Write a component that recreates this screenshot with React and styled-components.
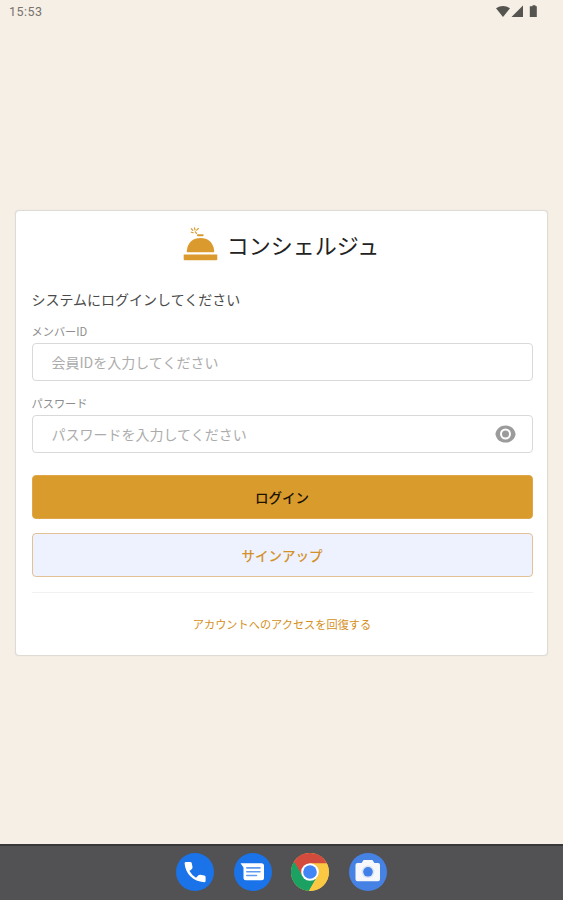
import React from 'react'
import styled, { createGlobalStyle } from 'styled-components'

const GlobalStyle = createGlobalStyle`
	* {
		box-sizing: border-box;
	}
	body {
		margin: 0;
		background-color: #f5efe6;
		font-family: 'Noto Sans CJK JP', 'Noto Sans', sans-serif;
	}
`

const Screen = styled.div`
	display: flex;
	flex-direction: column;
	height: 900px;
	background-color: #f5efe6;
`

const StatusBar = styled.div`
	display: flex;
	justify-content: space-between;
	align-items: center;
	height: 23px;
	padding: 0 25px 0 9px;
	flex-shrink: 0;
`

const Time = styled.span`
	font-family: Roboto, sans-serif;
	font-size: 12.5px;
	letter-spacing: 0.5px;
	color: #77736d;
`

const Main = styled.main`
	flex: 1;
	padding: 187px 15px 0;
`

const Card = styled.section`
	height: 446px;
	padding: 16px 14.5px 0 15.5px;
	border: 1px solid #dddbd4;
	border-radius: 4px;
	background-color: #ffffff;
	box-shadow: 0 0 1px #d8d6cf;
`

const Brand = styled.div`
	display: flex;
	justify-content: center;
	height: 36px;
	padding-right: 2px;
	gap: 9px;
`

const BrandName = styled.h1`
	margin: 0;
	font-size: 22px;
	font-weight: 400;
	line-height: 34px;
	color: #222222;
`

const Lead = styled.p`
	margin: 26px 0 0;
	font-size: 14px;
	line-height: 20px;
	color: #4a4a4a;
`

const Label = styled.label`
	display: block;
	margin-top: ${props => props.$top}px;
	font-size: 11.2px;
	line-height: 16px;
	color: #8d8d8d;
`

const Field = styled.div`
	display: flex;
	align-items: center;
	justify-content: space-between;
	height: 38px;
	margin-top: 4px;
	padding: 0 16px 0 19px;
	border: 1px solid #d9d9d9;
	border-radius: 4px;
	background-color: #ffffff;
`

const Input = styled.input`
	flex: 1;
	min-width: 0;
	padding: 0;
	border: none;
	outline: none;
	background: none;
	font-family: inherit;
	font-size: 14px;
	color: #444444;

	&::placeholder {
		color: #acacac;
		opacity: 1;
	}
`

const Button = styled.button`
	display: block;
	width: 100%;
	height: 44px;
	margin-top: ${props => props.$top}px;
	padding: 0 0 1px;
	border: 1px solid ${props => (props.$primary ? '#e0a74a' : '#e2c197')};
	border-radius: 4px;
	background-color: ${props => (props.$primary ? '#da9b2d' : '#edf2fe')};
	color: ${props => (props.$primary ? '#1c1303' : '#d4912a')};
	font-family: inherit;
	font-size: 13.5px;
	font-weight: 500;
`

const Divider = styled.hr`
	height: 1px;
	margin: 15px 0 0;
	border: none;
	background-color: #f1f1f1;
`

const Recover = styled.a`
	display: block;
	margin-top: 23px;
	font-size: 11.2px;
	font-weight: 400;
	line-height: 16px;
	text-align: center;
	color: #d58f22;
`

const Dock = styled.nav`
	display: flex;
	justify-content: center;
	gap: 19.5px;
	height: 56px;
	padding-top: 7px;
	border-top: 2px solid #38383a;
	background-color: #525255;
	flex-shrink: 0;
`

const StatusIcons = () => (
	<svg width="42" height="14" viewBox="0 0 42 14" fill="#56544f">
		<path d="M0 3.2Q7 -1 14 3.2L7 12Z" />
		<path d="M27 0.5V12H15.5Z" />
		<path d="M35.2 1.2H36.5V0.2H39.5V1.2H40.8V12H33.8V1.2Z" />
	</svg>
)

const BellIcon = () => (
	<svg width="35" height="36" viewBox="0 0 35 36" fill="#db9a2e">
		<path d="M0.7 27.6H34.3V32.2Q34.3 33.3 33.2 33.3H1.8Q0.7 33.3 0.7 32.2Z" />
		<path d="M3.9 25.3V23.2C4.6 15.5 10 10.9 17.5 10.9S30.4 15.5 31.1 23.2V25.3Z" />
		<rect x="14" y="7.2" width="6.6" height="2" rx="0.8" />
		<g stroke="#db9a2e" strokeWidth="1.2" strokeLinecap="round">
			<path d="M8.3 1.7L9.8 3.4M11.4 0.9L12.1 3M15.4 1.4L13.7 3.2M8.3 5.2L10.2 5.8M12.3 4.8L13.5 6.4" />
		</g>
	</svg>
)

const EyeIcon = () => (
	<svg width="21" height="18" viewBox="0 0 21 18">
		<path d="M0.4 9C1.4 3.4 5.4 0.4 10.5 0.4S19.6 3.4 20.6 9C19.6 14.6 15.6 17.6 10.5 17.6S1.4 14.6 0.4 9Z" fill="#9b9b9b" />
		<circle cx="10.5" cy="9" r="4.5" fill="#9b9b9b" stroke="#ffffff" strokeWidth="2" />
	</svg>
)

const PhoneIcon = () => (
	<svg width="38" height="38" viewBox="0 0 38 38">
		<circle cx="19" cy="19" r="19" fill="#1a73e8" />
		<path
			d="M8.6 10.3Q8.6 8.9 10 8.9H14.2Q15.5 8.9 15.8 10.2L16.5 14Q16.7 15.1 15.9 15.9L13.5 18.1Q15.8 22.3 20 24.7L22.4 22.3Q23.2 21.5 24.3 21.7L28.3 22.5Q29.6 22.8 29.6 24.1V27.7Q29.6 29.2 28.1 29.2C17.4 28.6 9.2 20.8 8.6 10.3Z"
			fill="#ffffff"
		/>
	</svg>
)

const MessagesIcon = () => (
	<svg width="38" height="38" viewBox="0 0 38 38">
		<circle cx="19" cy="19" r="19" fill="#1a73e8" />
		<path d="M6.5 10.3H27.5Q30 10.3 30 12.8V24.7Q30 27.2 27.5 27.2H12Q9.5 27.2 9.5 24.7V14.5Z" fill="#ffffff" />
		<path d="M12.8 14.9H26M12.8 18.7H26M12.8 22.5H22.5" stroke="#5f9bef" strokeWidth="1.6" strokeLinecap="round" />
	</svg>
)

const ChromeIcon = () => (
	<svg width="38" height="38" viewBox="0 0 38 38">
		<circle cx="19" cy="19" r="19" fill="#fbc843" />
		<path d="M19 10.5H35.9A19 19 0 0 0 2.5 9.5L11.6 23.2L19 19Z" fill="#d34b3d" />
		<path d="M2.5 9.5A19 19 0 0 0 17.9 38L26.4 23.2L19 19L11.6 23.2L3.8 9.8Z" fill="#1ba262" />
		<path d="M26.4 23.2L17.9 38A19 19 0 0 0 35.9 10.5H19Z" fill="#fbc843" />
		<circle cx="19" cy="19" r="8.8" fill="#ffffff" />
		<circle cx="19" cy="19" r="6.8" fill="#4285f4" />
	</svg>
)

const CameraIcon = () => (
	<svg width="38" height="38" viewBox="0 0 38 38">
		<circle cx="19" cy="19" r="19" fill="#4682e4" />
		<path d="M8.5 10.1H12.6L14.6 7.1H23.4L25.4 10.1H29Q31 10.1 31 12.1V26.2Q31 28.2 29 28.2H8.5Q6.5 28.2 6.5 26.2V12.1Q6.5 10.1 8.5 10.1Z" fill="#f5f7fb" />
		<circle cx="19" cy="18.8" r="6.2" fill="#d9e3f5" />
		<circle cx="19" cy="18.8" r="4.8" fill="#4080e8" />
	</svg>
)

const App = () => {
	return (
		<React.Fragment>
			<GlobalStyle />
			<Screen>
				<StatusBar>
					<Time>15:53</Time>
					<StatusIcons />
				</StatusBar>
				<Main>
					<Card>
						<Brand>
							<BellIcon />
							<BrandName>コンシェルジュ</BrandName>
						</Brand>
						<Lead>システムにログインしてください</Lead>
						<Label $top={14} htmlFor="member">メンバーID</Label>
						<Field>
							<Input id="member" placeholder="会員IDを入力してください" />
						</Field>
						<Label $top={14} htmlFor="password">パスワード</Label>
						<Field>
							<Input id="password" type="password" placeholder="パスワードを入力してください" />
							<EyeIcon />
						</Field>
						<Button $primary $top={22}>ログイン</Button>
						<Button $top={14}>サインアップ</Button>
						<Divider />
						<Recover>アカウントへのアクセスを回復する</Recover>
					</Card>
				</Main>
				<Dock>
					<PhoneIcon />
					<MessagesIcon />
					<ChromeIcon />
					<CameraIcon />
				</Dock>
			</Screen>
		</React.Fragment>
	)
}

export default App
